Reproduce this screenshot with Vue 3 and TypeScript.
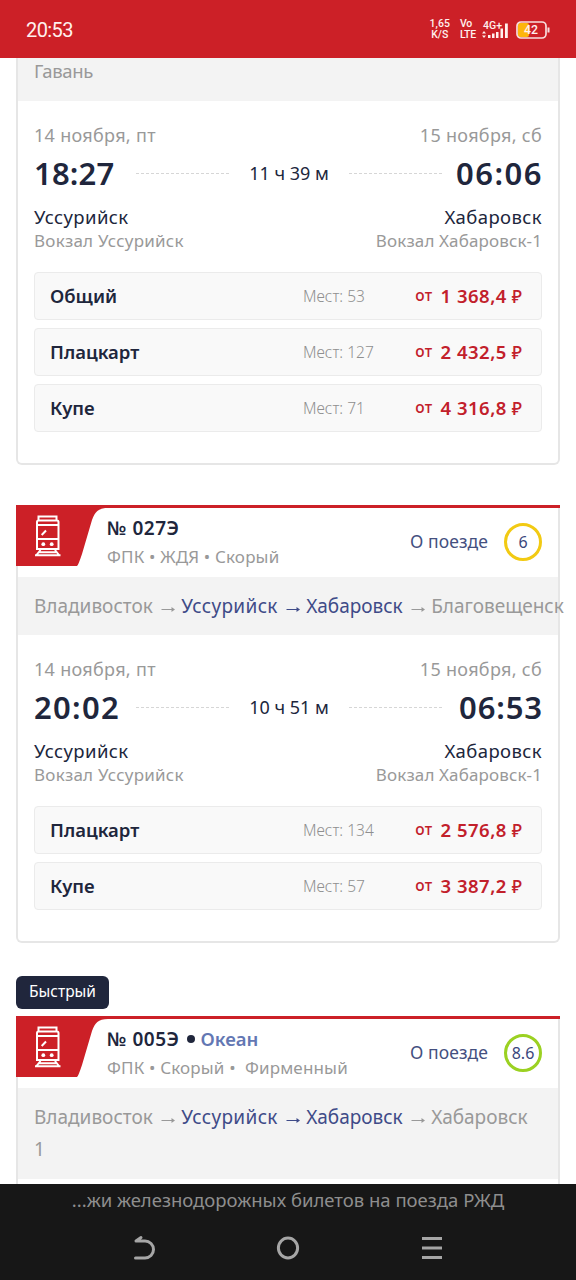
<script setup lang="ts">
interface Seat { name: string; places: number; price: string }
interface Stop { name: string; active?: boolean }
interface Train {
  id: string
  badge?: string
  number?: string
  brand?: string
  tags?: string
  rating?: string
  tone?: string
  route: Stop[]
  depart?: string
  arrive?: string
  duration?: string
  seats: Seat[]
}

const trains: Train[] = [
  {
    id: 'first',
    route: [{ name: 'Гавань' }],
    depart: '18:27',
    arrive: '06:06',
    duration: '11 ч 39 м',
    seats: [
      { name: 'Общий', places: 53, price: '1 368,4' },
      { name: 'Плацкарт', places: 127, price: '2 432,5' },
      { name: 'Купе', places: 71, price: '4 316,8' },
    ],
  },
  {
    id: 'second',
    number: '№ 027Э',
    tags: 'ФПК • ЖДЯ • Скорый',
    rating: '6',
    tone: 'yellow',
    route: [{ name: 'Владивосток' }, { name: 'Уссурийск', active: true }, { name: 'Хабаровск', active: true }, { name: 'Благовещенск' }],
    depart: '20:02',
    arrive: '06:53',
    duration: '10 ч 51 м',
    seats: [
      { name: 'Плацкарт', places: 134, price: '2 576,8' },
      { name: 'Купе', places: 57, price: '3 387,2' },
    ],
  },
  {
    id: 'third',
    badge: 'Быстрый',
    number: '№ 005Э',
    brand: 'Океан',
    tags: 'ФПК • Скорый •  Фирменный',
    rating: '8.6',
    tone: 'green',
    route: [{ name: 'Владивосток' }, { name: 'Уссурийск', active: true }, { name: 'Хабаровск', active: true }, { name: 'Хабаровск 1' }],
    seats: [],
  },
]
</script>

<template>
  <div class="screen">
    <header class="status">
      <span class="clock">20:53</span>
      <div class="indicators">
        <div class="pair speed"><b>1,65</b><b>K/S</b></div>
        <div class="pair volte"><b>Vo</b><b>LTE</b></div>
        <svg class="signal" width="27" height="20" viewBox="0 0 27 20">
          <text x="1" y="8.500" textLength="19" lengthAdjust="spacingAndGlyphs">4G+</text>
          <path d="M0 13.500L2 11l2 2.500zM0 15.500h4L2 18z" />
          <path d="M6 15h2.500v3H6zM10 13.500h2.500V18H10zM14 12h2.500v6H14zM18.500 8.500H21V18h-2.500zM23 3.500h2.800V18H23z" />
        </svg>
        <svg class="battery" width="35" height="18" viewBox="0 0 35 18">
          <rect x="2" y="2" width="11" height="14" rx="2" fill="#fdb50d" />
          <rect x="1" y="1" width="29" height="16" rx="4" fill="none" stroke="#f7dede" stroke-width="1.700" />
          <path d="M32.500 6.500v5" stroke="#f7dede" stroke-width="2" />
          <text x="8" y="13.300" textLength="14" lengthAdjust="spacingAndGlyphs">42</text>
        </svg>
      </div>
    </header>

    <main class="list">
      <section v-for="t in trains" :key="t.id" class="entry">
        <span v-if="t.badge" class="badge">{{ t.badge }}</span>
        <article class="card" :class="`card-${t.id}`">
          <div v-if="t.number" class="head">
            <svg class="logo" width="92" height="61" viewBox="0 0 92 61">
              <path d="M0 0H92V3C82 3 79 7 76 15L66 49Q62 61 61 61H0Z" fill="#cc2027" />
              <g fill="none" stroke="#fff" stroke-width="2">
                <path d="M22.500 15.500v-4h18v4M21 45V17q0-1.500 1.500-1.500h18.500q1.500 0 1.500 1.500V45M21 20h21.500M21 34h21.500M21 44h21.500M24.500 45L20.500 50M39 45L43 50M19 50.200h25.500M23 47.300h17.500M25.700 30l4.300-4.500" />
              </g>
              <circle cx="27.300" cy="39.200" r="1.900" fill="#fff" /><circle cx="35.700" cy="39.200" r="1.900" fill="#fff" />
            </svg>
            <div class="title">
              <div class="number"><span>{{ t.number }}</span><template v-if="t.brand"><i class="dot"></i><span class="brand">{{ t.brand }}</span></template></div>
              <div class="tags">{{ t.tags }}</div>
            </div>
            <span class="about">О поезде</span>
            <span class="rating" :class="t.tone">{{ t.rating }}</span>
          </div>

          <div class="route">
            <template v-for="(s, i) in t.route" :key="i">
              <span v-if="i" class="arrow" :class="{ active: i === 2 }"><svg width="15" height="9" viewBox="0 0 15 9"><path d="M0.500 5.500h12" stroke="currentColor" stroke-width="1" /><path d="M10.500 3L14 5.500L10.500 8Z" fill="currentColor" /></svg></span>
              {{ ' ' }}<span :class="{ active: s.active, from: s.active && i === 1 }">{{ s.name }}</span>
            </template>
          </div>

          <div v-if="t.depart" class="body">
            <div class="line date"><span>14 ноября, пт</span><span>15 ноября, сб</span></div>
            <div class="line times">
              <span class="time" :class="{ narrow: t.depart.startsWith('1') }">{{ t.depart }}</span>
              <span class="middle"><i class="dash"></i><span class="duration">{{ t.duration }}</span><i class="dash"></i></span>
              <span class="time end" :class="{ tight: t.arrive === '06:53' }">{{ t.arrive }}</span>
            </div>
            <div class="line city"><span>Уссурийск</span><span>Хабаровск</span></div>
            <div class="line station"><span>Вокзал Уссурийск</span><span class="to">Вокзал Хабаровск-1</span></div>
            <div class="seats">
              <div v-for="s in t.seats" :key="s.name" class="seat">
                <span class="kind">{{ s.name }}</span>
                <span class="places">Мест: {{ s.places }}</span>
                <span class="price"><small>от</small><span class="sum">{{ s.price }}</span> <span class="rub">₽</span></span>
              </div>
            </div>
          </div>
        </article>
      </section>
    </main>

    <footer class="bottom">
      <div class="caption">...жи железнодорожных билетов на поезда РЖД</div>
      <nav class="nav">
        <svg width="24" height="26" viewBox="0 0 24 26"><path d="M3.500 23H13a8.500 8.500 0 0 0 0-17H4L9 2.500" /></svg>
        <svg width="24" height="26" viewBox="0 0 24 26"><ellipse cx="12" cy="13" rx="9.600" ry="10" /></svg>
        <svg width="24" height="26" viewBox="0 0 24 26"><path d="M2 3.500h20M2 13h20M2 22.500h20" stroke-linecap="butt" /></svg>
      </nav>
    </footer>
  </div>
</template>

<style>
html, body { margin: 0; background: #fff; }
</style>

<style scoped>
* { box-sizing: border-box; }
.screen { width: 576px; height: 1280px; display: flex; flex-direction: column; overflow: hidden; background: #fff; font-family: "Noto Sans", "Open Sans", sans-serif; color: #20263c; white-space: nowrap; }
.status { flex: none; height: 58px; background: #cc2027; display: flex; align-items: center; justify-content: space-between; padding: 1px 25px 0 26px; color: #fff0ee; font-family: Roboto, sans-serif; }
.clock { font-size: 20px; letter-spacing: -0.6px; }
.indicators { display: flex; align-items: center; }
.pair { display: flex; flex-direction: column; align-items: center; font-size: 10.500px; line-height: 11px; margin-top: -2px; }
.pair b { font-weight: 500; }
.volte { margin-left: 10px; align-items: flex-start; letter-spacing: -0.2px; }
.signal { margin-left: 6px; fill: #fff0ee; font: 500 11px Roboto, sans-serif; }
.battery { margin-left: 7px; fill: #fff0ee; font: 500 12px Roboto, sans-serif; }
.list { flex: 1; min-height: 0; overflow: hidden; padding: 0 16px; }
.entry { display: flow-root; }
.badge { display: block; width: 93px; height: 33px; margin: 33px 0 7px; border-radius: 6px; background: #20263c; color: #fff; font-size: 15.500px; line-height: 31px; text-align: center; }
.card { border: 2px solid #e6e6e6; border-top: 0; border-radius: 0 0 6px 6px; }
.card-second { margin-top: 40px; }
.card-third { min-height: 200px; }
.head { display: flex; align-items: flex-start; height: 72px; margin: 0 -2px; border-top: 3px solid #cc2027; padding-right: 18px; }
.logo { flex: none; margin-top: -3px; }
.title { flex: 1; margin-left: -1px; padding-top: 6px; }
.number { font-size: 19px; line-height: 28px; font-weight: 600; letter-spacing: 0.5px; display: flex; align-items: center; }
.dot { width: 8px; height: 8px; border-radius: 50%; background: #20263c; margin: 0 5px 0 8px; }
.brand { font-size: 18.500px; color: #6377b3; letter-spacing: 0; }
.tags { font-size: 17px; line-height: 30px; color: #999; letter-spacing: 0.16px; white-space: pre; }
.about { font-size: 17.500px; line-height: 66px; color: #44507f; margin-right: 16px; letter-spacing: 0.1px; }
.rating { width: 38px; height: 38px; margin-top: 15px; border: 3px solid; border-radius: 50%; font-size: 16px; line-height: 32px; text-align: center; color: #3b477c; }
.rating.yellow { border-color: #f2ca13; }
.rating.green { border-color: #9bd122; }
.route { background: #f3f3f3; color: #999; font-size: 19px; line-height: 32px; padding: 13px 0 13px 16px; }
.card-first .route { padding: 0 0 17px 16px; height: 43px; line-height: 26px; font-size: 18.500px; letter-spacing: -0.35px; }
.card-third .route { white-space: normal; padding-right: 18px; height: 91px; }
.active { color: #3f4b88; }
.from { letter-spacing: 0.35px; }
.arrow { margin: 0 0.500px 0 8px; }
.arrow svg { overflow: visible; }
.body { padding: 18px 16px 31px; }
.line { display: flex; justify-content: space-between; align-items: center; }
.date { height: 32px; font-size: 18px; color: #999; letter-spacing: 0.3px; }
.times { height: 44px; }
.time { font-size: 31px; font-weight: 600; width: 102px; letter-spacing: 1.300px; margin-top: -1px; }
.narrow { letter-spacing: 0.2px; }
.end { text-align: right; margin-right: -1px; margin-left: -1px; letter-spacing: 1.500px; }
.tight { letter-spacing: 0.900px; }
.middle { flex: 1; display: flex; align-items: center; justify-content: space-between; }
.duration { font-size: 18px; }
.dash { width: 93px; border-top: 1px dashed #d6d6d6; }
.city { margin-top: 9px; height: 24px; font-size: 18.500px; letter-spacing: 0.4px; }
.station { height: 24px; font-size: 17px; color: #999; letter-spacing: 0.24px; }
.to { letter-spacing: 0.14px; }
.seats { margin-top: 20px; display: grid; gap: 8px; }
.seat { height: 48px; display: flex; align-items: center; background: #f9f9f9; border: 1px solid #ebebeb; border-radius: 4px; padding: 0 19px 0 15px; }
.kind { width: 253px; font-size: 18.500px; font-weight: 600; margin-top: -2px; }
.places { flex: 1; font-size: 15.500px; font-weight: 300; color: #8f8f8f; }
.price { color: #c2202b; font-size: 18.500px; font-weight: 600; margin-top: -2px; }
.price small { font-size: 15.500px; font-weight: 500; margin-right: 8px; letter-spacing: 0.4px; position: relative; top: -2px; }
.sum { letter-spacing: 0.5px; }
.rub { font-size: 17.500px; font-weight: 500; }
.bottom { flex: none; height: 96px; background: #171717; color: #8e8e8e; text-align: center; }
.caption { font-size: 18.500px; line-height: 32px; }
.nav { display: flex; justify-content: center; gap: 120px; margin-top: 19px; }
.nav svg { fill: none; stroke: #a6a6a6; stroke-width: 3; stroke-linecap: round; stroke-linejoin: round; }
</style>
